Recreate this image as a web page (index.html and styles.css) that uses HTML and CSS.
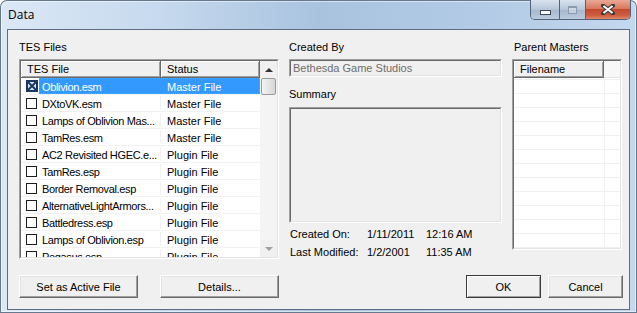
FILE: index.html
```html
<!DOCTYPE html>
<html>
  <head>
    <meta charset="UTF-8" />
    <title>Data</title>
    <link rel="stylesheet" href="styles.css">
  </head>
  <body>
    <div class="window">
      <div class="titlebar">
        <span class="title">Data</span>
        <div class="caption-buttons">
          <div class="cap-btn min"><span class="min-bar"></span></div>
          <div class="cap-btn max"><span class="max-box"></span></div>
          <div class="cap-btn close">
            <svg width="14" height="11" viewBox="0 0 14 11">
              <path d="M2 1.5 L12 9.5 M12 1.5 L2 9.5" stroke="#3a3a3a" stroke-width="4" stroke-linecap="square" />
              <path d="M2.5 2 L11.5 9 M11.5 2 L2.5 9" stroke="#ffffff" stroke-width="2" />
            </svg>
          </div>
        </div>
      </div>

      <div class="client">
        <div class="columns">
          <!-- 插件列表 -->
          <div class="col-files">
            <div class="label">TES Files</div>
            <div class="sunken files-box">
              <div class="sunken-inner files-inner">
                <div class="list-main">
                  <div class="header">
                    <div class="hcell c-file">TES File</div>
                    <div class="hcell c-status">Status</div>
                  </div>
                  <div class="rows">
                    <div class="row selected">
                      <span class="check">
                        <svg width="12" height="12" viewBox="0 0 12 12">
                          <rect x="1" y="1" width="10" height="10" fill="#dbe6f4" stroke="#1c3761" stroke-width="2" />
                          <path d="M2 2 L10 10 M10 2 L2 10" stroke="#1c3761" stroke-width="2" />
                        </svg>
                      </span>
                      <span class="sel-area">
                        <span class="name">Oblivion.esm</span>
                        <span class="status">Master File</span>
                      </span>
                    </div>
                    <div class="row"><span class="check"><span class="box"></span></span><span class="sel-area"><span class="name">DXtoVK.esm</span><span class="status">Master File</span></span></div>
                    <div class="row"><span class="check"><span class="box"></span></span><span class="sel-area"><span class="name">Lamps of Oblivion Mas...</span><span class="status">Master File</span></span></div>
                    <div class="row"><span class="check"><span class="box"></span></span><span class="sel-area"><span class="name">TamRes.esm</span><span class="status">Master File</span></span></div>
                    <div class="row"><span class="check"><span class="box"></span></span><span class="sel-area"><span class="name">AC2 Revisited HGEC.e...</span><span class="status">Plugin File</span></span></div>
                    <div class="row"><span class="check"><span class="box"></span></span><span class="sel-area"><span class="name">TamRes.esp</span><span class="status">Plugin File</span></span></div>
                    <div class="row"><span class="check"><span class="box"></span></span><span class="sel-area"><span class="name">Border Removal.esp</span><span class="status">Plugin File</span></span></div>
                    <div class="row"><span class="check"><span class="box"></span></span><span class="sel-area"><span class="name">AlternativeLightArmors...</span><span class="status">Plugin File</span></span></div>
                    <div class="row"><span class="check"><span class="box"></span></span><span class="sel-area"><span class="name">Battledress.esp</span><span class="status">Plugin File</span></span></div>
                    <div class="row"><span class="check"><span class="box"></span></span><span class="sel-area"><span class="name">Lamps of Oblivion.esp</span><span class="status">Plugin File</span></span></div>
                    <div class="row"><span class="check"><span class="box"></span></span><span class="sel-area"><span class="name">Pegasus.esp</span><span class="status">Plugin File</span></span></div>
                  </div>
                </div>
                <div class="scrollbar">
                  <div class="sb-arrow up"><span class="tri-up"></span></div>
                  <div class="sb-thumb"></div>
                  <div class="sb-track"></div>
                  <div class="sb-arrow down"><span class="tri-down"></span></div>
                </div>
              </div>
            </div>
          </div>

          <!-- 文件信息 -->
          <div class="col-info">
            <div class="label">Created By</div>
            <div class="sunken textbox">
              <div class="sunken-inner textbox-inner">Bethesda Game Studios</div>
            </div>
            <div class="label summary-label">Summary</div>
            <div class="sunken summary">
              <div class="sunken-inner summary-inner"></div>
            </div>
            <div class="dates">
              <span>Created On:</span><span>1/11/2011</span><span>12:16 AM</span>
              <span>Last Modified:</span><span>1/2/2001</span><span>11:35 AM</span>
            </div>
          </div>

          <!-- 父级主文件 -->
          <div class="col-masters">
            <div class="label masters-label">Parent Masters</div>
            <div class="sunken masters-box">
              <div class="sunken-inner masters-inner">
                <div class="header">
                  <div class="hcell c-filename">Filename</div>
                  <div class="hfill"></div>
                </div>
                <div class="master-rows">
                  <div class="master-col"></div>
                </div>
              </div>
            </div>
          </div>
        </div>

        <div class="buttons">
          <button class="btn wide">Set as Active File</button>
          <button class="btn wide details">Details...</button>
          <div class="spacer"></div>
          <button class="btn default">OK</button>
          <button class="btn">Cancel</button>
        </div>
      </div>
    </div>
  </body>
</html>
```

FILE: styles.css
```css
body {
  margin: 0;
  width: 637px;
  height: 313px;
  overflow: hidden;
  background: #ffffff;
  font-family: "Liberation Sans", Arial, sans-serif;
  font-size: 11px;
  color: #000;
}

.window {
  height: 313px;
  display: flex;
  flex-direction: column;
  border-radius: 7px 7px 0 0;
  background: linear-gradient(90deg, #dbe8f6 0%, #c6d9ee 25%, #a9c3df 50%, #b2cae5 75%, #c4d8ee 100%);
  box-shadow: inset 0 0 0 1px #66788e, inset 0 0 0 2px rgba(255, 255, 255, 0.5);
  box-sizing: border-box;
}

.titlebar {
  height: 29px;
  position: relative;
  flex-shrink: 0;
}

.title {
  position: absolute;
  left: 8px;
  top: 6px;
  font-family: "Open Sans", "Noto Sans", sans-serif;
  font-size: 12px;
  color: #000;
}

.caption-buttons {
  position: absolute;
  top: 0;
  right: 6px;
  display: flex;
  height: 19px;
  border: 1px solid #52627a;
  border-top: none;
  border-radius: 0 0 5px 5px;
  overflow: hidden;
}

.cap-btn {
  display: flex;
  align-items: center;
  justify-content: center;
  height: 19px;
}

.cap-btn.min {
  width: 28px;
  background: linear-gradient(#d9e3ef, #b6c6d9 50%, #a5b7cc 51%, #bccbde);
  border-right: 1px solid #52627a;
}

.cap-btn.max {
  width: 25px;
  background: linear-gradient(#d9e3ef, #b6c6d9 50%, #a5b7cc 51%, #bccbde);
  border-right: 1px solid #52627a;
}

.cap-btn.close {
  width: 44px;
  background: linear-gradient(#e9a996, #d9785f 45%, #c44a2e 50%, #cf5c3e 80%, #e08a6a);
}

.min-bar {
  width: 9px;
  height: 3px;
  margin-top: 5px;
  background: #fff;
  border: 1px solid #3d4756;
}

.max-box {
  width: 7px;
  height: 5px;
  border: 1px solid #8d9bb0;
  border-top-width: 2px;
  background: rgba(255, 255, 255, 0.3);
}

.client {
  flex: 1;
  margin: 0 7px 3px 7px;
  background: #f0f0f0;
  border: 1px solid #5c6d82;
  padding: 11px 6px 0 11px;
}

.columns {
  display: flex;
  gap: 10px;
  height: 219px;
}

.label {
  height: 13px;
  line-height: 13px;
  margin-bottom: 5px;
  white-space: nowrap;
}

/* 凹陷边框 */
.sunken {
  border: 1px solid;
  border-color: #a0a0a0 #ffffff #ffffff #a0a0a0;
  box-sizing: border-box;
}

.sunken-inner {
  border: 1px solid;
  border-color: #696969 #e3e3e3 #e3e3e3 #696969;
  height: 100%;
  box-sizing: border-box;
}

.col-files {
  width: 260px;
}

.files-box {
  height: 200px;
}

.files-inner {
  display: flex;
  background: #fff;
}

.list-main {
  width: 239px;
  overflow: hidden;
}

.header {
  display: flex;
  height: 17px;
  background: #f0f0f0;
}

.hcell {
  height: 17px;
  line-height: 16px;
  box-sizing: border-box;
  padding-left: 6px;
  border-right: 1px solid #696969;
  border-bottom: 1px solid #696969;
  box-shadow: inset 1px 1px #ffffff, inset -1px -1px #a0a0a0;
  white-space: nowrap;
}

.c-file {
  width: 140px;
}

.c-status {
  width: 99px;
}

.rows {
  height: 179px;
  overflow: hidden;
}

.row {
  display: flex;
  height: 17px;
  line-height: 16px;
  border-bottom: 1px solid #f2f2f2;
  box-sizing: border-box;
}

.check {
  width: 18px;
  display: flex;
  align-items: center;
  padding-left: 5px;
  box-sizing: border-box;
}

.box {
  width: 9px;
  height: 9px;
  border: 1px solid #1e1e1e;
  background: #fff;
}

.sel-area {
  display: flex;
  width: 221px;
  box-sizing: border-box;
  border: 1px solid transparent;
}

.name {
  width: 121px;
  padding-left: 2px;
  box-sizing: border-box;
  overflow: hidden;
  white-space: nowrap;
  letter-spacing: -0.35px;
  border-right: 1px solid #f2f2f2;
}

.status {
  padding-left: 6px;
  white-space: nowrap;
}

.row.selected .sel-area {
  background: #3399ff;
  color: #fff;
  border: 1px dotted #e08a3a;
}

.row.selected .name {
  border-right-color: #3399ff;
}

.scrollbar {
  width: 17px;
  display: flex;
  flex-direction: column;
  background: #f4f4f4;
}

.sb-arrow {
  height: 17px;
  display: flex;
  align-items: center;
  justify-content: center;
  background: #f0f0f0;
}

.tri-up {
  width: 0;
  height: 0;
  border-left: 4px solid transparent;
  border-right: 4px solid transparent;
  border-bottom: 4px solid #333;
}

.tri-down {
  width: 0;
  height: 0;
  border-left: 4px solid transparent;
  border-right: 4px solid transparent;
  border-top: 4px solid #a0a0a0;
}

.sb-thumb {
  height: 17px;
  margin: 0 1px;
  border: 1px solid #9a9a9a;
  border-radius: 2px;
  background: linear-gradient(90deg, #f4f4f4, #e2e2e2 60%, #d6d6d6);
  box-sizing: border-box;
}

.sb-track {
  flex: 1;
}

.col-info {
  width: 213px;
}

.textbox {
  height: 18px;
}

.textbox-inner {
  background: #f0f0f0;
  color: #6d6d6d;
  line-height: 15px;
  padding-left: 2px;
  white-space: nowrap;
}

.summary-label {
  margin-top: 11px;
  margin-bottom: 6px;
}

.summary {
  height: 116px;
}

.summary-inner {
  background: #f0f0f0;
}

.dates {
  display: grid;
  grid-template-columns: 77px 59px auto;
  grid-auto-rows: 18px;
  margin-top: 5px;
  padding-left: 1px;
  line-height: 13px;
  white-space: nowrap;
}

.col-masters {
  width: 110px;
}

.masters-label {
  padding-left: 2px;
}

.masters-box {
  height: 191px;
}

.masters-inner {
  background: #fff;
  display: flex;
  flex-direction: column;
}

.c-filename {
  width: 90px;
}

.hfill {
  flex: 1;
  border-bottom: 1px solid #e3e3e3;
  box-sizing: border-box;
  background: #f7f7f7;
}

.master-rows {
  flex: 1;
  background: repeating-linear-gradient(to bottom, #ffffff 0 1px, #f0f0f0 1px 2px, #ffffff 2px 14px);
}

.master-col {
  width: 90px;
  height: 100%;
  border-right: 1px solid #f0f0f0;
}

.buttons {
  display: flex;
  gap: 22px;
  margin-top: 15px;
}

.btn {
  height: 23px;
  width: 75px;
  padding: 0;
  font-family: "Liberation Sans", Arial, sans-serif;
  font-size: 11px;
  color: #000;
  background: #f0f0f0;
  border: 1px solid;
  border-color: #ffffff #696969 #696969 #ffffff;
  box-shadow: inset -1px -1px #a0a0a0, inset 1px 1px #e3e3e3;
}

.btn.wide {
  width: 119px;
}

.btn.default {
  border-color: #3c3c3c;
  box-shadow: inset 1px 1px #ffffff, inset -1px -1px #a0a0a0;
}

.btn.default + .btn {
  margin-left: -15px;
}

.spacer {
  flex: 1;
}
```
